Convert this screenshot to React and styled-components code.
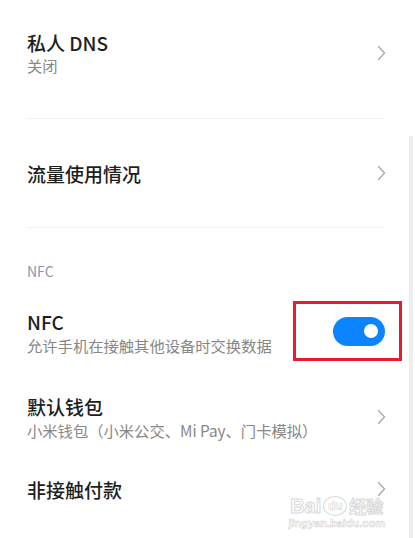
import React from "react";
import styled, { createGlobalStyle } from "styled-components";

const Global = createGlobalStyle`
  html, body { margin: 0; padding: 0; background: #fff; }
  body { font-family: "Noto Sans CJK SC", "Noto Sans", sans-serif; }
`;

const Page = styled.div`
  position: relative;
  width: 415px;
  height: 538px;
  overflow: hidden;
  background: #fff;
  padding: 0 30px 0 27px;
  box-sizing: border-box;
  display: flex;
  flex-direction: column;
`;

const Row = styled.div`
  height: ${(p) => p.$h}px;
  display: flex;
  align-items: center;
  justify-content: space-between;
  flex-shrink: 0;
`;

const TextCol = styled.div`
  display: flex;
  flex-direction: column;
  gap: ${(p) => p.$gap ?? 2}px;
`;

const Title = styled.div`
  font-size: 19px;
  line-height: 23px;
  font-weight: 500;
  color: #1e1e1e;
`;

const Sub = styled.div`
  font-size: 15.3px;
  line-height: 20px;
  color: #878787;
`;

const Divider = styled.div`
  height: 1px;
  background: #f1f1f1;
  margin-top: ${(p) => p.$mt || 0}px;
  flex-shrink: 0;
`;

const SectionHeader = styled.div`
  padding-top: 34px;
  font-size: 14px;
  line-height: 18px;
  color: #8d95b8;
  flex-shrink: 0;
`;

const ToggleWrap = styled.div`
  position: relative;
  margin-top: -2px;
  &::after {
    content: "";
    position: absolute;
    left: -40px;
    right: -17px;
    top: -16px;
    bottom: -15px;
    border: 3px solid #e61e2b;
    pointer-events: none;
  }
`;

const Toggle = styled.div`
  width: 52px;
  height: 29px;
  border-radius: 15px;
  background: #0d84ff;
  display: flex;
  align-items: center;
  justify-content: flex-end;
  padding-right: 7px;
  box-sizing: border-box;
`;

const Knob = styled.div`
  width: 14px;
  height: 14px;
  border-radius: 50%;
  background: #fff;
`;

const ScrollBar = styled.div`
  position: absolute;
  right: 2px;
  top: 136px;
  bottom: 0;
  width: 4px;
  background: #eeeeee;
`;

const Watermark = styled.div`
  position: absolute;
  right: 30px;
  bottom: 8px;
  display: flex;
  flex-direction: column;
  align-items: center;
  pointer-events: none;
`;

const WmLogo = styled.div`
  font-family: "Liberation Sans", sans-serif;
  font-size: 20px;
  line-height: 22px;
  font-weight: 700;
  color: #fff;
  -webkit-text-stroke: 1px #d9d9d9;
  display: flex;
  align-items: center;
  gap: 2px;
`;

const WmPaw = styled.span`
  display: inline-flex;
  align-items: center;
  justify-content: center;
  width: 22px;
  height: 18px;
  border: 1px solid #d9d9d9;
  border-radius: 50%;
  font-size: 12px;
  -webkit-text-stroke: 0.6px #d9d9d9;
`;

const WmCn = styled.span`
  font-family: "Noto Sans CJK SC", sans-serif;
  font-size: 17px;
  -webkit-text-stroke: 1px #d9d9d9;
`;

const WmUrl = styled.div`
  font-family: "Liberation Sans", sans-serif;
  font-size: 11px;
  line-height: 13px;
  font-weight: 700;
  color: #fff;
  -webkit-text-stroke: 0.6px #d6d6d6;
`;

const Chevron = () => (
  <svg width="9" height="16" viewBox="0 0 9 16" style={{ marginRight: -1 }}>
    <path d="M1.5 1.5 L7.5 8 L1.5 14.5" fill="none" stroke="#ababab" strokeWidth="1.4" strokeLinecap="round" strokeLinejoin="round" />
  </svg>
);

export default function App() {
  return (
    <>
      <Global />
      <Page>
        <Row $h={106}>
          <TextCol $gap={1}>
            <Title>私人 DNS</Title>
            <Sub>关闭</Sub>
          </TextCol>
          <Chevron />
        </Row>
        <Divider $mt={12} />
        <Row $h={108}>
          <Title>流量使用情况</Title>
          <Chevron />
        </Row>
        <Divider />
        <SectionHeader>NFC</SectionHeader>
        <Row $h={104}>
          <TextCol $gap={2}>
            <Title>NFC</Title>
            <Sub>允许手机在接触其他设备时交换数据</Sub>
          </TextCol>
          <ToggleWrap>
            <Toggle>
              <Knob />
            </Toggle>
          </ToggleWrap>
        </Row>
        <Row $h={66}>
          <TextCol $gap={2}>
            <Title>默认钱包</Title>
            <Sub>小米钱包（小米公交、Mi Pay、门卡模拟）</Sub>
          </TextCol>
          <Chevron />
        </Row>
        <Row $h={78}>
          <Title>非接触付款</Title>
          <Chevron />
        </Row>
        <ScrollBar />
        <Watermark>
          <WmLogo>
            Bai<WmPaw>du</WmPaw>
            <WmCn>经验</WmCn>
          </WmLogo>
          <WmUrl>jingyan.baidu.com</WmUrl>
        </Watermark>
      </Page>
    </>
  );
}
